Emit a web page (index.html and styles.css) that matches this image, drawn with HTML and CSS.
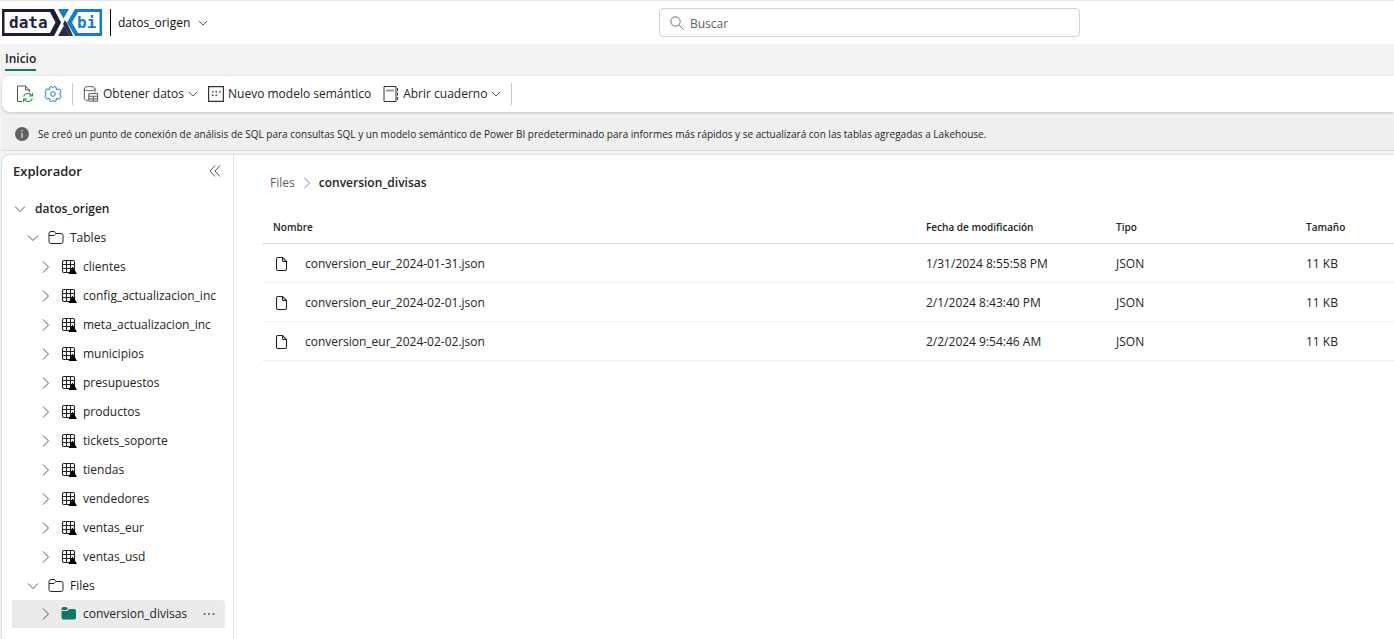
FILE: index.html
```
<!DOCTYPE html>
<html lang="es">
<head>
<meta charset="utf-8">
<meta name="viewport" content="width=device-width, initial-scale=1">
<title>datos_origen</title>
<link rel="stylesheet" href="styles.css">
</head>
<body>
<svg class="defs" aria-hidden="true">
  <symbol id="down" viewBox="0 0 12 12"><path d="M1 3.500l5 5 5-5" fill="none" stroke="currentColor"/></symbol>
  <symbol id="right" viewBox="0 0 12 12"><path d="M3 .5L8.500 6 3 11.500" fill="none" stroke="currentColor"/></symbol>
  <symbol id="folder" viewBox="0 0 16 16"><path d="M1 3.500v8a2 2 0 0 0 2 2h10a2 2 0 0 0 2-2v-6a2 2 0 0 0-2-2H8L6.500 1.500H3a2 2 0 0 0-2 2zM1 5.500h5l2-2" fill="none" stroke="currentColor"/></symbol>
  <symbol id="table" viewBox="0 0 16 16"><path d="M3 1.500h9q1.500 0 1.500 1.500v9q0 1.500-1.500 1.500H3q-1.500 0-1.500-1.500V3q0-1.500 1.500-1.500zM5.500 1.500v12M9.500 1.500v12M1.500 5.500h12M1.500 9.500h12" fill="none" stroke="#222" stroke-width="1.100"/><path d="M11.500 7.500L16 15H7.500z" fill="#000"/></symbol>
  <symbol id="file" viewBox="0 0 16 16"><path d="M5 1.500h4.500l4 4V13a1.500 1.500 0 0 1-1.500 1.500H5A1.500 1.500 0 0 1 3.500 13V3A1.500 1.500 0 0 1 5 1.500zM9.500 1.500V4.500q0 1 1 1H13.500" fill="none" stroke="currentColor" stroke-width="1.100"/></symbol>
</svg>

<header class="header">
  <svg class="logo" viewBox="0 0 100 27" role="img" aria-label="dataXbi">
    <path d="M0 0h52l7 13.500L52 27H0z" fill="#1e1d36"/>
    <path d="M2.500 3H48l5.500 10.500L48 24H2.500z" fill="#fff"/>
    <path d="M56 0h11l-5.500 9.500z" fill="#127bd4"/>
    <path d="M100 0H73l-8 13.500L73 27h27z" fill="#127bd4"/>
    <path d="M97.500 3H76l-6 10.500L76 24h21.500z" fill="#fff"/>
    <path d="M56 27l6-10.500L68 27z" fill="#2a2a42"/>
    <path d="M63 11l3.500 6L71 27h-3l-7-12z" fill="#2a2a42"/>
    <text class="logo-text" x="7" y="19" fill="#24233b">data</text>
    <text class="logo-text" x="75" y="19" fill="#127bd4">bi</text>
  </svg>
  <button class="workspace">datos_origen<svg class="chev-small"><use href="#down"/></svg></button>
  <label class="search">
    <svg class="search-icon" viewBox="0 0 14 14" aria-hidden="true"><circle cx="5.500" cy="5.500" r="4.700"/><path d="M9 9l4.500 4.500"/></svg>
    <input class="search-input" type="search" placeholder="Buscar" aria-label="Buscar">
  </label>
</header>

<nav class="tabs"><a class="tab" href="#">Inicio</a></nav>

<div class="toolbar" role="toolbar">
  <button class="icon-button" aria-label="Actualizar"><svg class="icon18" viewBox="0 0 18 18" fill="none"><path d="M6 16.500H1.500V1h8l4 4v2M9.500 1v4h4" stroke="#555"/><path d="M7.500 11.500a4.500 4.500 0 0 1 8-1M16.500 8v3H13M16.500 13.500a4.500 4.500 0 0 1-8 1M7.500 17v-3H11" stroke="#2f9e4c" stroke-width="1.200"/></svg></button>
  <button class="icon-button" aria-label="Configuración"><svg class="icon18" viewBox="0 0 18 18" fill="none" stroke="#1683d0"><path d="M7.200 1.500Q9 3.500 10.800 1.500L12 2l.5 2.500 3-.5 1.500 3q-2.500 2 0 4l-1.500 3-3-.5L12 16l-1.200.5Q9 14.500 7.200 16.500L6 16l-.5-2.500-3 .5L1 11q2.500-2 0-4l1.500-3 3 .5L6 2z"/><circle cx="9" cy="9" r="2.300"/></svg></button>
  <span class="divider"></span>
  <button class="tool"><svg class="icon16" viewBox="0 0 16 18" fill="none" stroke="#444"><ellipse cx="6.500" cy="3" rx="6" ry="2.400"/><path d="M.5 3v11.500q1 2 4 2M12.500 3v4M5.500 8.500h10v8.500h-10zM5.500 11.500h10M10.500 11.500V17M5.500 14.500h10"/></svg>Obtener datos<svg class="chev-small"><use href="#down"/></svg></button>
  <button class="tool"><svg class="icon16" viewBox="0 0 16 16"><path d="M.6.6h14.800v14.800H.6z" fill="none" stroke="#333" stroke-width="1.200"/><path d="M4 5h1.500v1.500H4zM7.500 5H9v1.500H7.500zM11 5h1.500v1.500H11zM4 8.500h1.500V10H4zM7.500 8.500H9V10H7.500z" fill="#444"/></svg>Nuevo modelo semántico</button>
  <button class="tool notebook"><svg class="icon16" viewBox="0 0 16 16" fill="none" stroke="#333"><path d="M1 .5h12v15H1z"/><path d="M3 4.500h8" stroke="#999" stroke-width="2"/><path d="M14.500 2v3M14.500 6.500v3M14.500 11v3"/></svg>Abrir cuaderno<svg class="chev-small"><use href="#down"/></svg></button>
  <span class="divider"></span>
</div>

<div class="notice" role="status">
  <svg class="info" viewBox="0 0 14 14" aria-hidden="true"><circle cx="7" cy="7" r="7" fill="#616161"/><path d="M7 3v1.500M7 6v5" stroke="#ddd" stroke-width="1.300"/></svg>
  <span>Se creó un punto de conexión de análisis de SQL para consultas SQL y un modelo semántico de Power BI predeterminado para informes más rápidos y se actualizará con las tablas agregadas a Lakehouse.</span>
</div>

<div class="workarea">
  <aside class="explorer">
    <div class="explorer-head"><h1 class="explorer-title">Explorador</h1><button class="collapse" aria-label="Contraer"><svg class="chev" viewBox="0 0 12 12" fill="none" stroke="#555"><path d="M6 .5L1 6l5 5.500M11 .5L6 6l5 5.500"/></svg></button></div>
    <ul class="tree">
      <li class="node root"><svg class="chev"><use href="#down"/></svg><span>datos_origen</span></li>
      <li class="node group"><svg class="chev"><use href="#down"/></svg><svg class="icon16"><use href="#folder"/></svg><span>Tables</span></li>
      <li class="node leaf"><svg class="chev"><use href="#right"/></svg><svg class="icon16"><use href="#table"/></svg><span>clientes</span></li>
      <li class="node leaf"><svg class="chev"><use href="#right"/></svg><svg class="icon16"><use href="#table"/></svg><span>config_actualizacion_inc</span></li>
      <li class="node leaf"><svg class="chev"><use href="#right"/></svg><svg class="icon16"><use href="#table"/></svg><span>meta_actualizacion_inc</span></li>
      <li class="node leaf"><svg class="chev"><use href="#right"/></svg><svg class="icon16"><use href="#table"/></svg><span>municipios</span></li>
      <li class="node leaf"><svg class="chev"><use href="#right"/></svg><svg class="icon16"><use href="#table"/></svg><span>presupuestos</span></li>
      <li class="node leaf"><svg class="chev"><use href="#right"/></svg><svg class="icon16"><use href="#table"/></svg><span>productos</span></li>
      <li class="node leaf"><svg class="chev"><use href="#right"/></svg><svg class="icon16"><use href="#table"/></svg><span>tickets_soporte</span></li>
      <li class="node leaf"><svg class="chev"><use href="#right"/></svg><svg class="icon16"><use href="#table"/></svg><span>tiendas</span></li>
      <li class="node leaf"><svg class="chev"><use href="#right"/></svg><svg class="icon16"><use href="#table"/></svg><span>vendedores</span></li>
      <li class="node leaf"><svg class="chev"><use href="#right"/></svg><svg class="icon16"><use href="#table"/></svg><span>ventas_eur</span></li>
      <li class="node leaf"><svg class="chev"><use href="#right"/></svg><svg class="icon16"><use href="#table"/></svg><span>ventas_usd</span></li>
      <li class="node group"><svg class="chev"><use href="#down"/></svg><svg class="icon16"><use href="#folder"/></svg><span>Files</span></li>
      <li class="node leaf selected"><svg class="chev"><use href="#right"/></svg><svg class="icon16" viewBox="0 0 16 16" fill="#117865"><path d="M.5 4V3Q.5 1 2.500 1H5l2 1.500L5.500 4z"/><path d="M.5 5H6l2.500-2H13q2 0 2 2v6.500q0 2-2 2H2.500q-2 0-2-2z"/></svg><span>conversion_divisas</span><button class="more" aria-label="Más opciones"><svg class="chev" viewBox="0 0 12 12" fill="#555"><circle cx="1.500" cy="6" r="1"/><circle cx="6" cy="6" r="1"/><circle cx="10.500" cy="6" r="1"/></svg></button></li>
    </ul>
  </aside>

  <main class="content">
    <nav class="crumbs" aria-label="Ruta"><a class="crumb" href="#">Files</a><svg class="chev crumb-chev"><use href="#right"/></svg><span class="current">conversion_divisas</span></nav>
    <table class="files">
      <colgroup><col><col class="col-date"><col class="col-type"><col class="col-size"></colgroup>
      <thead><tr><th>Nombre</th><th>Fecha de modificación</th><th>Tipo</th><th>Tamaño</th></tr></thead>
      <tbody>
        <tr><td><span class="filename"><svg class="icon16"><use href="#file"/></svg>conversion_eur_2024-01-31.json</span></td><td>1/31/2024 8:55:58 PM</td><td>JSON</td><td>11 KB</td></tr>
        <tr><td><span class="filename"><svg class="icon16"><use href="#file"/></svg>conversion_eur_2024-02-01.json</span></td><td>2/1/2024 8:43:40 PM</td><td>JSON</td><td>11 KB</td></tr>
        <tr><td><span class="filename"><svg class="icon16"><use href="#file"/></svg>conversion_eur_2024-02-02.json</span></td><td>2/2/2024 9:54:46 AM</td><td>JSON</td><td>11 KB</td></tr>
      </tbody>
    </table>
  </main>
</div>
</body>
</html>
```
FILE: styles.css
```
* { box-sizing: border-box; }
html, body { height: 100%; }
body {
  margin: 0;
  display: flex;
  flex-direction: column;
  background: #f3f3f3;
  color: #242424;
  font: 12px/16px "Open Sans", "Noto Sans", sans-serif;
}
button { font: inherit; color: inherit; background: none; border: 0; padding: 0; display: flex; align-items: center; white-space: nowrap; }
a { color: inherit; text-decoration: none; }
svg { flex: none; display: block; }
.defs { display: none; }
.chev { width: 12px; height: 12px; color: #555; }
.chev-small { width: 10px; height: 10px; color: #333; }
.icon16 { width: 16px; height: 16px; }
.icon18 { width: 18px; height: 18px; }

.header {
  display: grid;
  grid-template-columns: 108px minmax(120px, 1fr) minmax(200px, 421px) minmax(0, 314px);
  align-items: center;
  padding: 7px 0 7px 2px;
  background: #fff;
  border-top: 1px solid #e5e5e5;
}
.logo { width: 100px; height: 27px; }
.logo-text { font: bold 16px "DejaVu Sans Mono", monospace; }
.workspace { justify-self: start; height: 27px; padding-left: 7px; gap: 8px; border-left: 1px solid #000; color: #111; }
.search { display: flex; align-items: center; gap: 6px; height: 29px; padding: 0 10px; border: 1px solid #d1d1d1; border-radius: 4px; }
.search-icon { width: 14px; height: 14px; fill: none; stroke: #707070; }
.search-input { flex: 1; min-width: 0; border: 0; outline: 0; padding: 2px 0 0; background: none; font: inherit; color: #242424; }
.search-input::placeholder { color: #616161; opacity: 1; }

.tabs { display: flex; padding: 6px 5px 5px; }
.tab { height: 21px; padding-top: 1px; font-weight: 600; border-bottom: 2px solid #117865; }

.toolbar {
  display: flex;
  align-items: center;
  height: 36px;
  margin-left: 2px;
  padding-left: 14px;
  gap: 10px;
  background: #fff;
  border-radius: 8px 0 0 8px;
  box-shadow: 0 1px 3px rgba(0, 0, 0, .2);
}
.tool { gap: 4px; }
.notebook { padding-left: 2px; }
.divider { width: 1px; height: 22px; background: #c8c8c8; }

.notice {
  display: flex;
  align-items: center;
  gap: 9px;
  height: 33px;
  margin: 6px 0 4px 2px;
  padding-left: 13px;
  background: #efefef;
  border-bottom: 1px solid #dcdcdc;
  font-size: 10px;
  white-space: nowrap;
  overflow: hidden;
}
.info { width: 14px; height: 14px; }

.workarea { flex: 1; display: flex; min-height: 0; margin-left: 2px; background: #fff; border-radius: 8px 0 0 0; box-shadow: 0 0 2px rgba(0, 0, 0, .25); }
.explorer { width: 232px; border-right: 1px solid #e3e3e3; padding: 0 8px 0 10px; }
.explorer-head { display: flex; justify-content: space-between; align-items: center; height: 32px; padding: 0 4px 0 1px; }
.explorer-title { margin: 0; font-size: 13px; font-weight: 600; }
.tree { list-style: none; margin: 7px 0 0; padding: 0; }
.node { display: flex; align-items: center; height: 29px; white-space: nowrap; border-radius: 0 4px 4px 0; }
.root { padding-left: 2px; gap: 9px; font-weight: 600; }
.group { padding-left: 15px; gap: 9px; }
.group span { margin-left: -3px; }
.leaf { padding-left: 28px; gap: 9px; }
.leaf span { margin-left: -3px; }
.selected { height: 28px; background: #ebebeb; }
.more { margin-left: auto; padding-right: 10px; }

.content { flex: 1; min-width: 0; padding: 20px 0 0 28px; }
.crumbs { display: flex; align-items: center; padding-left: 8px; gap: 6px; }
.crumb { color: #616161; }
.crumb-chev { color: #8a8a8a; }
.current { font-weight: 600; }
.files { width: 100%; margin-top: 19px; border-collapse: collapse; table-layout: fixed; }
.col-date, .col-type { width: 190px; }
.col-size { width: 99px; }
.files th { height: 33px; padding: 1px 11px 0; text-align: left; font-size: 10px; font-weight: 600; border-bottom: 1px solid #dcdcdc; }
.files td { height: 39px; padding: 2px 11px 0; border-bottom: 1px solid #efefef; white-space: nowrap; }
.filename { display: flex; align-items: center; gap: 16px; }
```
